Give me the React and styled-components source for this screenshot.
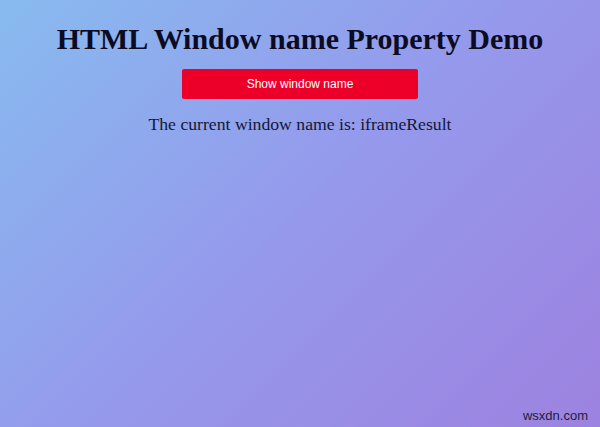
import React from 'react';
import styled, {createGlobalStyle} from 'styled-components';

const GlobalStyle = createGlobalStyle`
  html, body {
    margin: 0;
    padding: 0;
  }
  body {
    font-family: "Liberation Serif", "Times New Roman", serif;
  }
`;

const Page = styled.div`
  position: relative;
  width: 600px;
  height: 427px;
  overflow: hidden;
  display: flex;
  flex-direction: column;
  align-items: center;
  background: linear-gradient(135deg, #88bbef 0%, #9599ec 50%, #9d82e0 100%);
  color: #0b0b22;
`;

const Title = styled.h1`
  margin: 21px 0 0;
  font-size: 30px;
  font-weight: bold;
  line-height: 35px;
`;

const ShowButton = styled.button`
  margin-top: 13px;
  width: 236px;
  height: 30px;
  border: none;
  border-radius: 2px;
  background: #ec0029;
  color: #fff;
  font-family: "Liberation Sans", Arial, sans-serif;
  font-size: 12px;
  cursor: pointer;
`;

const Result = styled.p`
  margin: 14px 0 0;
  font-size: 17.7px;
  line-height: 22px;
  color: #141838;
`;

const Watermark = styled.span`
  position: absolute;
  right: 12px;
  bottom: 4px;
  font-family: "Liberation Sans", Arial, sans-serif;
  font-size: 13px;
  color: #1d1d3a;
`;

export default function App() {
  return (
    <Page>
      <GlobalStyle />
      <Title>HTML Window name Property Demo</Title>
      <ShowButton>Show window name</ShowButton>
      <Result>The current window name is: iframeResult</Result>
      <Watermark>wsxdn.com</Watermark>
    </Page>
  );
}
